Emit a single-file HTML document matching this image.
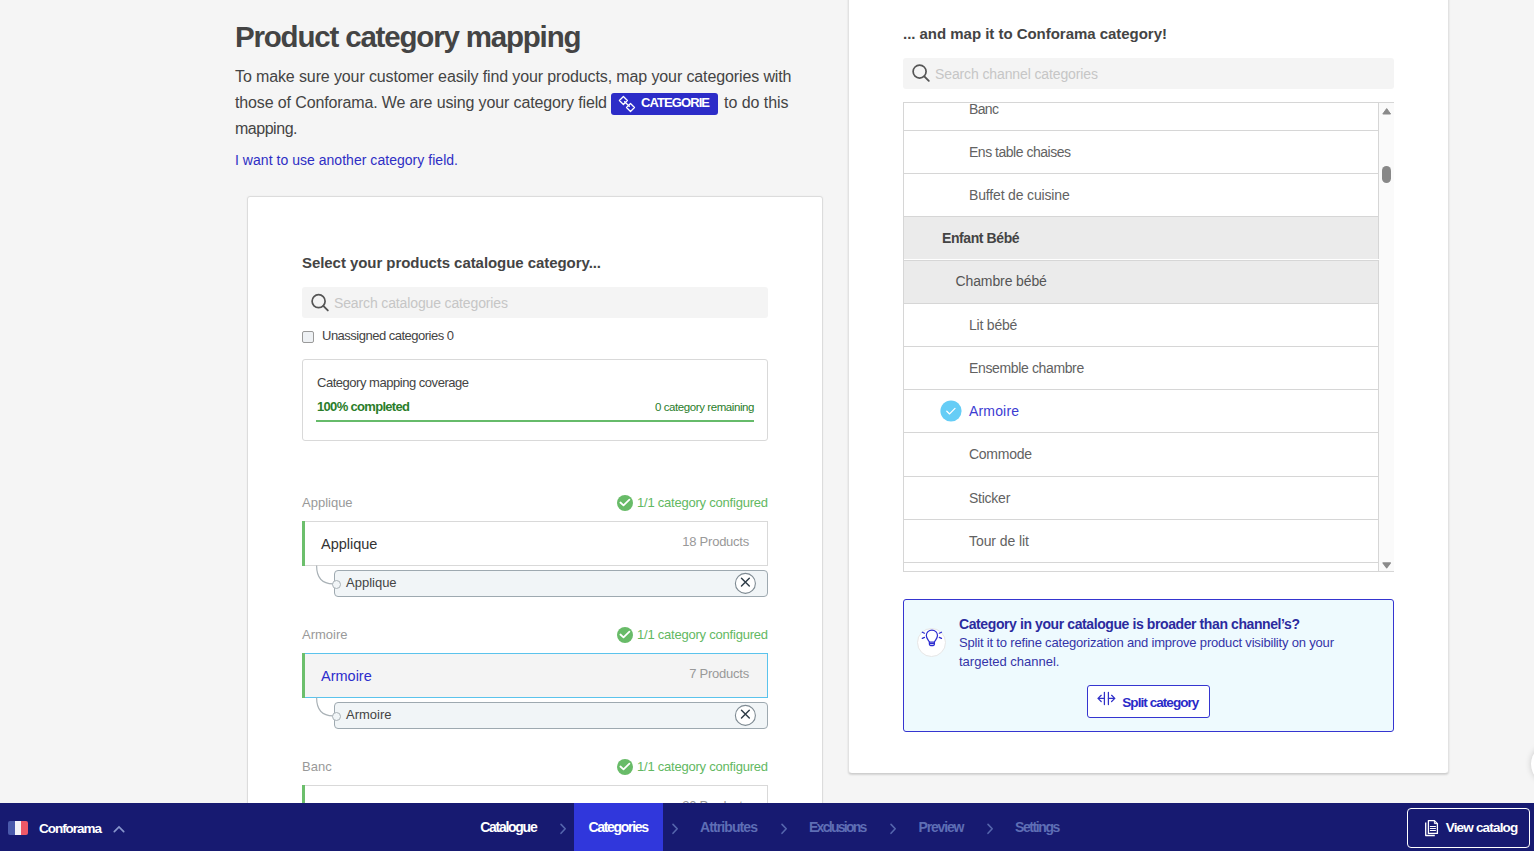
<!DOCTYPE html>
<html><head><meta charset="utf-8">
<style>
*{box-sizing:border-box;margin:0;padding:0}
html,body{width:1534px;height:851px;overflow:hidden;background:#f5f5f5;font-family:"Liberation Sans",sans-serif;color:#444}
body{position:relative}
.t{position:absolute;white-space:nowrap}
.r{position:absolute}
svg.r{overflow:visible}
</style></head><body>
<div class="t" style="left:235.00px;top:20.00px;font-size:29.5px;line-height:33px;color:#444;font-weight:bold;letter-spacing:-1.184px;">Product category mapping</div>
<div class="t" style="left:235.00px;top:68.00px;font-size:16px;line-height:17px;color:#444;letter-spacing:-0.118px;">To make sure your customer easily find your products, map your categories with</div>
<div class="t" style="left:235.00px;top:93.50px;font-size:16px;line-height:17px;color:#444;letter-spacing:-0.129px;">those of Conforama. We are using your category field</div>
<div class="r" style="left:611px;top:93px;width:107px;height:22px;background:#2c2cc8;border-radius:3px;"></div>
<svg class="r" style="left:612px;top:92px" width="30" height="24" viewBox="612 92 30 24"><g fill="none" stroke="#fff" stroke-width="1.25" stroke-linejoin="round" stroke-linecap="round"><path d="M623.4 96.5 L627.4 100.5 L623.4 104.5 L619.4 100.5 Z"/><path d="M630.5 103.5 L634.5 107.5 L630.5 111.5 L626.5 107.5 Z"/><path d="M624.6 101.7 L629.3 106.3"/></g></svg>
<div class="t" style="left:641.00px;top:95.30px;font-size:13px;line-height:15px;color:#fff;font-weight:bold;letter-spacing:-0.915px;">CATEGORIE</div>
<div class="t" style="left:724.00px;top:93.50px;font-size:16px;line-height:17px;color:#444;letter-spacing:-0.048px;">to do this</div>
<div class="t" style="left:235.00px;top:119.50px;font-size:16px;line-height:17px;color:#444;letter-spacing:-0.475px;">mapping.</div>
<div class="t" style="left:235.00px;top:152.00px;font-size:14px;line-height:16px;color:#2e2ec4;letter-spacing:0.033px;">I want to use another category field.</div>
<div class="r" style="left:247px;top:196px;width:576px;height:704px;background:#fff;border:1px solid #dcdcdc;border-radius:3px;box-shadow:0 0 2px rgba(0,0,0,.05);"></div>
<div class="t" style="left:302.00px;top:253.70px;font-size:15px;line-height:17px;color:#444;font-weight:bold;letter-spacing:-0.060px;">Select your products catalogue category...</div>
<div class="r" style="left:302px;top:287px;width:466px;height:31px;background:#f4f4f4;border-radius:3px;"></div>
<svg class="r" style="left:309px;top:292px" width="22" height="22" viewBox="0 0 22 22"><circle cx="9.6" cy="9.2" r="6.5" fill="none" stroke="#555" stroke-width="1.7"/><line x1="14.3" y1="13.9" x2="18.8" y2="18.4" stroke="#555" stroke-width="1.9" stroke-linecap="round"/></svg>
<div class="t" style="left:334.00px;top:294.70px;font-size:14px;line-height:16px;color:#c6c6c6;letter-spacing:-0.133px;">Search catalogue categories</div>
<div class="r" style="left:302px;top:331px;width:12px;height:12px;background:#eef1f4;border:1px solid #9a9a9a;border-radius:2px;"></div>
<div class="t" style="left:322.00px;top:327.60px;font-size:13px;line-height:15px;color:#444;letter-spacing:-0.504px;">Unassigned categories 0</div>
<div class="r" style="left:302px;top:359px;width:466px;height:82px;background:#fff;border:1px solid #d9d9d9;border-radius:3px;"></div>
<div class="t" style="left:317.00px;top:375.00px;font-size:13px;line-height:15px;color:#444;letter-spacing:-0.472px;">Category mapping coverage</div>
<div class="t" style="left:317.00px;top:399.00px;font-size:13px;line-height:15px;color:#2a7d2a;font-weight:bold;letter-spacing:-0.683px;">100% completed</div>
<div class="t" style="left:634.50px;width:119.50px;text-align:right;top:401.00px;font-size:11.5px;line-height:12px;color:#2a7d2a;letter-spacing:-0.416px;margin-right:0.416px;">0 category remaining</div>
<div class="r" style="left:316px;top:420px;width:438px;height:2px;background:#66bb6a;"></div>
<div class="t" style="left:302.00px;top:495.00px;font-size:13px;line-height:15px;color:#999;">Applique</div>
<svg class="r" style="left:617px;top:495px" width="16" height="16" viewBox="0 0 16 16"><circle cx="8" cy="8" r="8" fill="#68bb68"/><path d="M3.4 7.5 L6.5 10.3 L12.4 4.7" fill="none" stroke="#fff" stroke-width="1.8" stroke-linecap="round" stroke-linejoin="round"/></svg>
<div class="t" style="left:637.00px;top:495.00px;font-size:13px;line-height:15px;color:#62b862;letter-spacing:-0.221px;">1/1 category configured</div>
<div class="r" style="left:302px;top:521px;width:466px;height:45px;background:#fff;border:1px solid #d9d9d9;"></div>
<div class="r" style="left:302px;top:521px;width:3px;height:45px;background:#6cbf6c;"></div>
<div class="t" style="left:321.00px;top:536.20px;font-size:14.5px;line-height:16px;color:#333;">Applique</div>
<div class="t" style="left:662.05px;width:86.95px;text-align:right;top:534.00px;font-size:13px;line-height:15px;color:#999;letter-spacing:-0.243px;margin-right:0.243px;">18 Products</div>
<svg class="r" style="left:310px;top:565px" width="40" height="30" viewBox="0 0 40 30"><path d="M6.6 0.5 Q6.6 18.8 23 18.8" fill="none" stroke="#a9b1b6" stroke-width="1.2"/></svg>
<div class="r" style="left:334px;top:570px;width:434px;height:27px;background:#f1f5f7;border:1px solid #9ea9b0;border-radius:4px;"></div>
<div class="r" style="left:332px;top:579.5px;width:9px;height:9px;border-radius:50%;background:#f1f5f7;border:1px solid #a9b1b6"></div>
<div class="t" style="left:346.00px;top:574.50px;font-size:13px;line-height:15px;color:#444;">Applique</div>
<svg class="r" style="left:735px;top:573px" width="21" height="21" viewBox="0 0 21 21"><circle cx="10.4" cy="10.4" r="10" fill="#fff" stroke="#7f8b93" stroke-width="1.1"/><path d="M6.5 5.3 L14.3 13.1 M14.3 5.3 L6.5 13.1" stroke="#2f3d48" stroke-width="1.45" stroke-linecap="round"/></svg>
<div class="t" style="left:302.00px;top:627.00px;font-size:13px;line-height:15px;color:#999;">Armoire</div>
<svg class="r" style="left:617px;top:627px" width="16" height="16" viewBox="0 0 16 16"><circle cx="8" cy="8" r="8" fill="#68bb68"/><path d="M3.4 7.5 L6.5 10.3 L12.4 4.7" fill="none" stroke="#fff" stroke-width="1.8" stroke-linecap="round" stroke-linejoin="round"/></svg>
<div class="t" style="left:637.00px;top:627.00px;font-size:13px;line-height:15px;color:#62b862;letter-spacing:-0.221px;">1/1 category configured</div>
<div class="r" style="left:302px;top:653px;width:466px;height:45px;background:#f4f4f4;border:1px solid #5bc3ec;"></div>
<div class="r" style="left:302px;top:653px;width:3px;height:45px;background:#6cbf6c;"></div>
<div class="t" style="left:321.00px;top:668.20px;font-size:14.5px;line-height:16px;color:#2d2dcc;">Armoire</div>
<div class="t" style="left:669.03px;width:79.97px;text-align:right;top:666.00px;font-size:13px;line-height:15px;color:#999;letter-spacing:-0.242px;margin-right:0.242px;">7 Products</div>
<svg class="r" style="left:310px;top:697px" width="40" height="30" viewBox="0 0 40 30"><path d="M6.6 0.5 Q6.6 18.8 23 18.8" fill="none" stroke="#a9b1b6" stroke-width="1.2"/></svg>
<div class="r" style="left:334px;top:702px;width:434px;height:27px;background:#f1f5f7;border:1px solid #9ea9b0;border-radius:4px;"></div>
<div class="r" style="left:332px;top:711.5px;width:9px;height:9px;border-radius:50%;background:#f1f5f7;border:1px solid #a9b1b6"></div>
<div class="t" style="left:346.00px;top:706.50px;font-size:13px;line-height:15px;color:#444;">Armoire</div>
<svg class="r" style="left:735px;top:705px" width="21" height="21" viewBox="0 0 21 21"><circle cx="10.4" cy="10.4" r="10" fill="#fff" stroke="#7f8b93" stroke-width="1.1"/><path d="M6.5 5.3 L14.3 13.1 M14.3 5.3 L6.5 13.1" stroke="#2f3d48" stroke-width="1.45" stroke-linecap="round"/></svg>
<div class="t" style="left:302.00px;top:759.00px;font-size:13px;line-height:15px;color:#999;">Banc</div>
<svg class="r" style="left:617px;top:759px" width="16" height="16" viewBox="0 0 16 16"><circle cx="8" cy="8" r="8" fill="#68bb68"/><path d="M3.4 7.5 L6.5 10.3 L12.4 4.7" fill="none" stroke="#fff" stroke-width="1.8" stroke-linecap="round" stroke-linejoin="round"/></svg>
<div class="t" style="left:637.00px;top:759.00px;font-size:13px;line-height:15px;color:#62b862;letter-spacing:-0.221px;">1/1 category configured</div>
<div class="r" style="left:302px;top:785px;width:466px;height:45px;background:#fff;border:1px solid #d9d9d9;"></div>
<div class="r" style="left:302px;top:785px;width:3px;height:45px;background:#6cbf6c;"></div>
<div class="t" style="left:321.00px;top:800.20px;font-size:14.5px;line-height:16px;color:#333;">Banc</div>
<div class="t" style="left:662.05px;width:86.95px;text-align:right;top:798.00px;font-size:13px;line-height:15px;color:#999;letter-spacing:-0.243px;margin-right:0.243px;">20 Products</div>
<div class="r" style="left:848px;top:-10px;width:601px;height:784px;background:#fff;border:1px solid #e2e2e2;border-bottom-color:#cfcfcf;border-top:none;border-radius:0 0 4px 4px;box-shadow:0 1px 2px rgba(0,0,0,.14);"></div>
<div class="t" style="left:903.00px;top:25.00px;font-size:15px;line-height:17px;color:#444;font-weight:bold;letter-spacing:-0.029px;">... and map it to Conforama category!</div>
<div class="r" style="left:903px;top:58px;width:491px;height:31px;background:#f4f4f4;border-radius:3px;"></div>
<svg class="r" style="left:910px;top:63px" width="22" height="22" viewBox="0 0 22 22"><circle cx="9.6" cy="8.6" r="6.5" fill="none" stroke="#555" stroke-width="1.7"/><line x1="14.3" y1="13.3" x2="18.8" y2="17.8" stroke="#555" stroke-width="1.9" stroke-linecap="round"/></svg>
<div class="t" style="left:935.00px;top:66.00px;font-size:14px;line-height:16px;color:#c6c6c6;letter-spacing:-0.116px;">Search channel categories</div>
<div class="r" style="left:903px;top:102px;width:491px;height:470px;border:1px solid #d6d6d6;border-right:none;overflow:hidden;background:#fff">
<div class="r" style="left:0;top:-16px;width:475px;height:43px;background:#fff;border-top:1px solid #d6d6d6;border-right:1px solid #d6d6d6"></div>
<div class="r" style="left:0;top:27px;width:475px;height:43px;background:#fff;border-top:1px solid #d6d6d6;border-right:1px solid #d6d6d6"></div>
<div class="r" style="left:0;top:70px;width:475px;height:43px;background:#fff;border-top:1px solid #d6d6d6;border-right:1px solid #d6d6d6"></div>
<div class="r" style="left:0;top:113px;width:475px;height:44px;background:#ebebeb;border-top:1px solid #d6d6d6;border-right:1px solid #d6d6d6"></div>
<div class="r" style="left:0;top:157px;width:475px;height:43px;background:#ebebeb;border-top:1px solid #d6d6d6;border-right:1px solid #d6d6d6"></div>
<div class="r" style="left:0;top:200px;width:475px;height:43px;background:#fff;border-top:1px solid #d6d6d6;border-right:1px solid #d6d6d6"></div>
<div class="r" style="left:0;top:243px;width:475px;height:43px;background:#fff;border-top:1px solid #d6d6d6;border-right:1px solid #d6d6d6"></div>
<div class="r" style="left:0;top:286px;width:475px;height:43px;background:#fff;border-top:1px solid #d6d6d6;border-right:1px solid #d6d6d6"></div>
<div class="r" style="left:0;top:329px;width:475px;height:44px;background:#fff;border-top:1px solid #d6d6d6;border-right:1px solid #d6d6d6"></div>
<div class="r" style="left:0;top:373px;width:475px;height:43px;background:#fff;border-top:1px solid #d6d6d6;border-right:1px solid #d6d6d6"></div>
<div class="r" style="left:0;top:416px;width:475px;height:43px;background:#fff;border-top:1px solid #d6d6d6;border-right:1px solid #d6d6d6"></div>
<div class="r" style="left:0;top:459px;width:475px;height:43px;background:#fff;border-top:1px solid #d6d6d6;border-right:1px solid #d6d6d6"></div>
<div class="r" style="left:0;top:156px;width:475px;height:1px;background:#fff"></div>
</div>
<div class="t" style="left:969.00px;top:101.00px;font-size:14px;line-height:16px;color:#626262;letter-spacing:-0.670px;">Banc</div>
<div class="t" style="left:969.00px;top:144.00px;font-size:14px;line-height:16px;color:#626262;letter-spacing:-0.483px;">Ens table chaises</div>
<div class="t" style="left:969.00px;top:187.00px;font-size:14px;line-height:16px;color:#626262;letter-spacing:-0.160px;">Buffet de cuisine</div>
<div class="t" style="left:942.00px;top:230.00px;font-size:14px;line-height:16px;color:#444;font-weight:bold;letter-spacing:-0.408px;">Enfant Bébé</div>
<div class="t" style="left:955.50px;top:272.50px;font-size:14px;line-height:16px;color:#555;letter-spacing:-0.111px;">Chambre bébé</div>
<div class="t" style="left:969.00px;top:317.00px;font-size:14px;line-height:16px;color:#626262;letter-spacing:-0.217px;">Lit bébé</div>
<div class="t" style="left:969.00px;top:360.00px;font-size:14px;line-height:16px;color:#626262;letter-spacing:-0.361px;">Ensemble chambre</div>
<div class="t" style="left:969.00px;top:403.00px;font-size:14px;line-height:16px;color:#3c3cd2;letter-spacing:0.165px;">Armoire</div>
<div class="t" style="left:969.00px;top:446.00px;font-size:14px;line-height:16px;color:#626262;letter-spacing:-0.264px;">Commode</div>
<div class="t" style="left:969.00px;top:490.00px;font-size:14px;line-height:16px;color:#626262;letter-spacing:-0.248px;">Sticker</div>
<div class="t" style="left:969.00px;top:533.00px;font-size:14px;line-height:16px;color:#626262;letter-spacing:-0.070px;">Tour de lit</div>
<svg class="r" style="left:940px;top:400px" width="22" height="22" viewBox="0 0 22 22"><circle cx="11" cy="11" r="10.6" fill="#66cdf6"/><path d="M6.8 11.3 L9.6 13.9 L15 8.4" fill="none" stroke="#fff" stroke-width="1.3" stroke-linecap="round" stroke-linejoin="round"/></svg>
<div class="r" style="left:1379px;top:103px;width:15px;height:468px;background:#fafafa;"></div>
<svg class="r" style="left:1380px;top:104px" width="14" height="14" viewBox="1380 104 14 14"><path d="M1386.7 108.6 L1390.6 114 L1382.8 114 Z" fill="#8a8a8a" stroke="#8a8a8a" stroke-width="1" stroke-linejoin="round"/></svg>
<div class="r" style="left:1382px;top:166px;width:9px;height:17px;background:#888;border-radius:5px;"></div>
<svg class="r" style="left:1380px;top:556px" width="14" height="14" viewBox="1380 556 14 14"><path d="M1382.9 562.9 L1390.5 562.9 L1386.7 567.9 Z" fill="#8a8a8a" stroke="#8a8a8a" stroke-width="1.1" stroke-linejoin="round"/></svg>
<div class="r" style="left:903px;top:599px;width:491px;height:133px;background:#eefafe;border:1px solid #3535d0;border-radius:3px;"></div>
<div class="r" style="left:917px;top:628px;width:29px;height:29px;border-radius:50%;background:#fff;border:1px solid #e6e6e6"></div>
<svg class="r" style="left:912px;top:622px" width="40" height="40" viewBox="912 622 40 40"><g fill="none" stroke="#2c2cd0" stroke-width="1.25" stroke-linecap="round" stroke-linejoin="round"><path d="M929.4 642 C928.6 640.1 926.3 638.4 926.3 635.6 A5.6 5.6 0 0 1 937.5 635.6 C937.5 638.4 935.2 640.1 934.4 642 Z"/><path d="M929.4 642 L929.4 644.3 Q929.4 645.5 930.6 645.5 L933.2 645.5 Q934.4 645.5 934.4 644.3 L934.4 642 M929.8 643.6 L934 643.6"/><path d="M922.3 632.2 L924.5 633.2 M922.3 638.4 L924.5 637.4 M941.5 632.2 L939.3 633.2 M941.5 638.4 L939.3 637.4"/></g></svg>
<div class="t" style="left:959.00px;top:615.80px;font-size:14px;line-height:16px;color:#2b2b9e;font-weight:bold;letter-spacing:-0.404px;">Category in your catalogue is broader than channel’s?</div>
<div class="t" style="left:959.00px;top:635.00px;font-size:13px;line-height:15px;color:#3434a8;letter-spacing:-0.184px;">Split it to refine categorization and improve product visibility on your</div>
<div class="t" style="left:959.00px;top:653.80px;font-size:13px;line-height:15px;color:#3434a8;">targeted channel.</div>
<div class="r" style="left:1087px;top:685px;width:123px;height:33px;background:#fff;border:1px solid #3535d0;border-radius:3px;"></div>
<svg class="r" style="left:1090px;top:685px" width="40" height="30" viewBox="1090 685 40 30"><g fill="none" stroke="#3030c8" stroke-width="1.25" stroke-linecap="round" stroke-linejoin="round"><path d="M1104.4 692.3 L1104.4 704.6 M1108.4 692.3 L1108.4 704.6"/><path d="M1104.4 698.4 L1098 698.4 M1101.2 695.3 L1098 698.4 L1101.2 701.5"/><path d="M1108.4 698.4 L1114.8 698.4 M1111.6 695.3 L1114.8 698.4 L1111.6 701.5"/></g></svg>
<div class="t" style="left:1122.30px;top:694.90px;font-size:13.5px;line-height:15px;color:#2a2ac8;font-weight:bold;letter-spacing:-0.944px;">Split category</div>
<div class="r" style="left:1531px;top:744px;width:40px;height:40px;border-radius:50%;background:#fff;box-shadow:0 0 6px rgba(0,0,0,.18)"></div>
<div class="r" style="left:0px;top:803px;width:1534px;height:48px;background:#171a71;"></div>
<div class="r" style="left:8px;top:821px;width:20px;height:14px;border-radius:2px;overflow:hidden;display:flex"><div style="flex:1;background:#4a5aab"></div><div style="flex:1;background:#f3f3f8"></div><div style="flex:1;background:#ee5868"></div></div>
<div class="t" style="left:39.00px;top:820.50px;font-size:13.5px;line-height:15px;color:#fff;font-weight:bold;letter-spacing:-1.032px;">Conforama</div>
<svg class="r" style="left:112px;top:823px" width="14" height="12" viewBox="0 0 14 12"><path d="M2.3 8.6 L7 3.9 L11.7 8.6" fill="none" stroke="#8795cc" stroke-width="1.7" stroke-linecap="round"/></svg>
<div class="r" style="left:574px;top:803px;width:89px;height:48px;background:#3037dc;"></div>
<div class="t" style="left:480.20px;top:818.70px;font-size:14px;line-height:16px;color:#fff;font-weight:bold;letter-spacing:-1.272px;">Catalogue</div>
<div class="t" style="left:588.40px;top:818.70px;font-size:14px;line-height:16px;color:#fff;font-weight:bold;letter-spacing:-1.307px;">Categories</div>
<div class="t" style="left:700.00px;top:818.70px;font-size:14px;line-height:16px;color:#5e6eb5;font-weight:bold;letter-spacing:-0.901px;">Attributes</div>
<div class="t" style="left:809.00px;top:818.70px;font-size:14px;line-height:16px;color:#5e6eb5;font-weight:bold;letter-spacing:-1.724px;">Exclusions</div>
<div class="t" style="left:918.50px;top:818.70px;font-size:14px;line-height:16px;color:#5e6eb5;font-weight:bold;letter-spacing:-1.154px;">Preview</div>
<div class="t" style="left:1015.00px;top:818.70px;font-size:14px;line-height:16px;color:#5e6eb5;font-weight:bold;letter-spacing:-1.404px;">Settings</div>
<svg class="r" style="left:558.4px;top:820px" width="12" height="16" viewBox="558.4 820 12 16"><path d="M561.4 824.4 L565.6 828.8 L561.4 833.3" fill="none" stroke="#5566ad" stroke-width="1.6" stroke-linecap="round" stroke-linejoin="round"/></svg>
<svg class="r" style="left:670.2px;top:820px" width="12" height="16" viewBox="670.2 820 12 16"><path d="M673.2 824.4 L677.4 828.8 L673.2 833.3" fill="none" stroke="#5566ad" stroke-width="1.6" stroke-linecap="round" stroke-linejoin="round"/></svg>
<svg class="r" style="left:778.8px;top:820px" width="12" height="16" viewBox="778.8 820 12 16"><path d="M781.8 824.4 L786.0 828.8 L781.8 833.3" fill="none" stroke="#5566ad" stroke-width="1.6" stroke-linecap="round" stroke-linejoin="round"/></svg>
<svg class="r" style="left:887.8px;top:820px" width="12" height="16" viewBox="887.8 820 12 16"><path d="M890.8 824.4 L895.0 828.8 L890.8 833.3" fill="none" stroke="#5566ad" stroke-width="1.6" stroke-linecap="round" stroke-linejoin="round"/></svg>
<svg class="r" style="left:984.6px;top:820px" width="12" height="16" viewBox="984.6 820 12 16"><path d="M987.6 824.4 L991.8 828.8 L987.6 833.3" fill="none" stroke="#5566ad" stroke-width="1.6" stroke-linecap="round" stroke-linejoin="round"/></svg>
<div class="r" style="left:1407px;top:808px;width:123px;height:40px;border:1.5px solid #fff;border-radius:4px;"></div>
<svg class="r" style="left:1418px;top:814px" width="30" height="28" viewBox="1418 814 30 28"><g fill="none" stroke="#fff" stroke-width="1.3" stroke-linejoin="round"><path d="M1428.4 820.6 L1434.4 820.6 L1437.4 823.6 L1437.4 833.4 L1428.4 833.4 Z"/><path d="M1434.4 820.6 L1434.4 823.6 L1437.4 823.6" stroke-width="1"/><path d="M1425.7 822.4 L1425.7 835.5 L1434.8 835.5"/><path d="M1429.9 826.5 L1435.9 826.5 M1429.9 828.5 L1435.9 828.5 M1429.9 830.5 L1435.9 830.5" stroke-width="1"/></g></svg>
<div class="t" style="left:1445.70px;top:820.00px;font-size:13.5px;line-height:15px;color:#fff;font-weight:bold;letter-spacing:-0.812px;">View catalog</div>
</body></html>
